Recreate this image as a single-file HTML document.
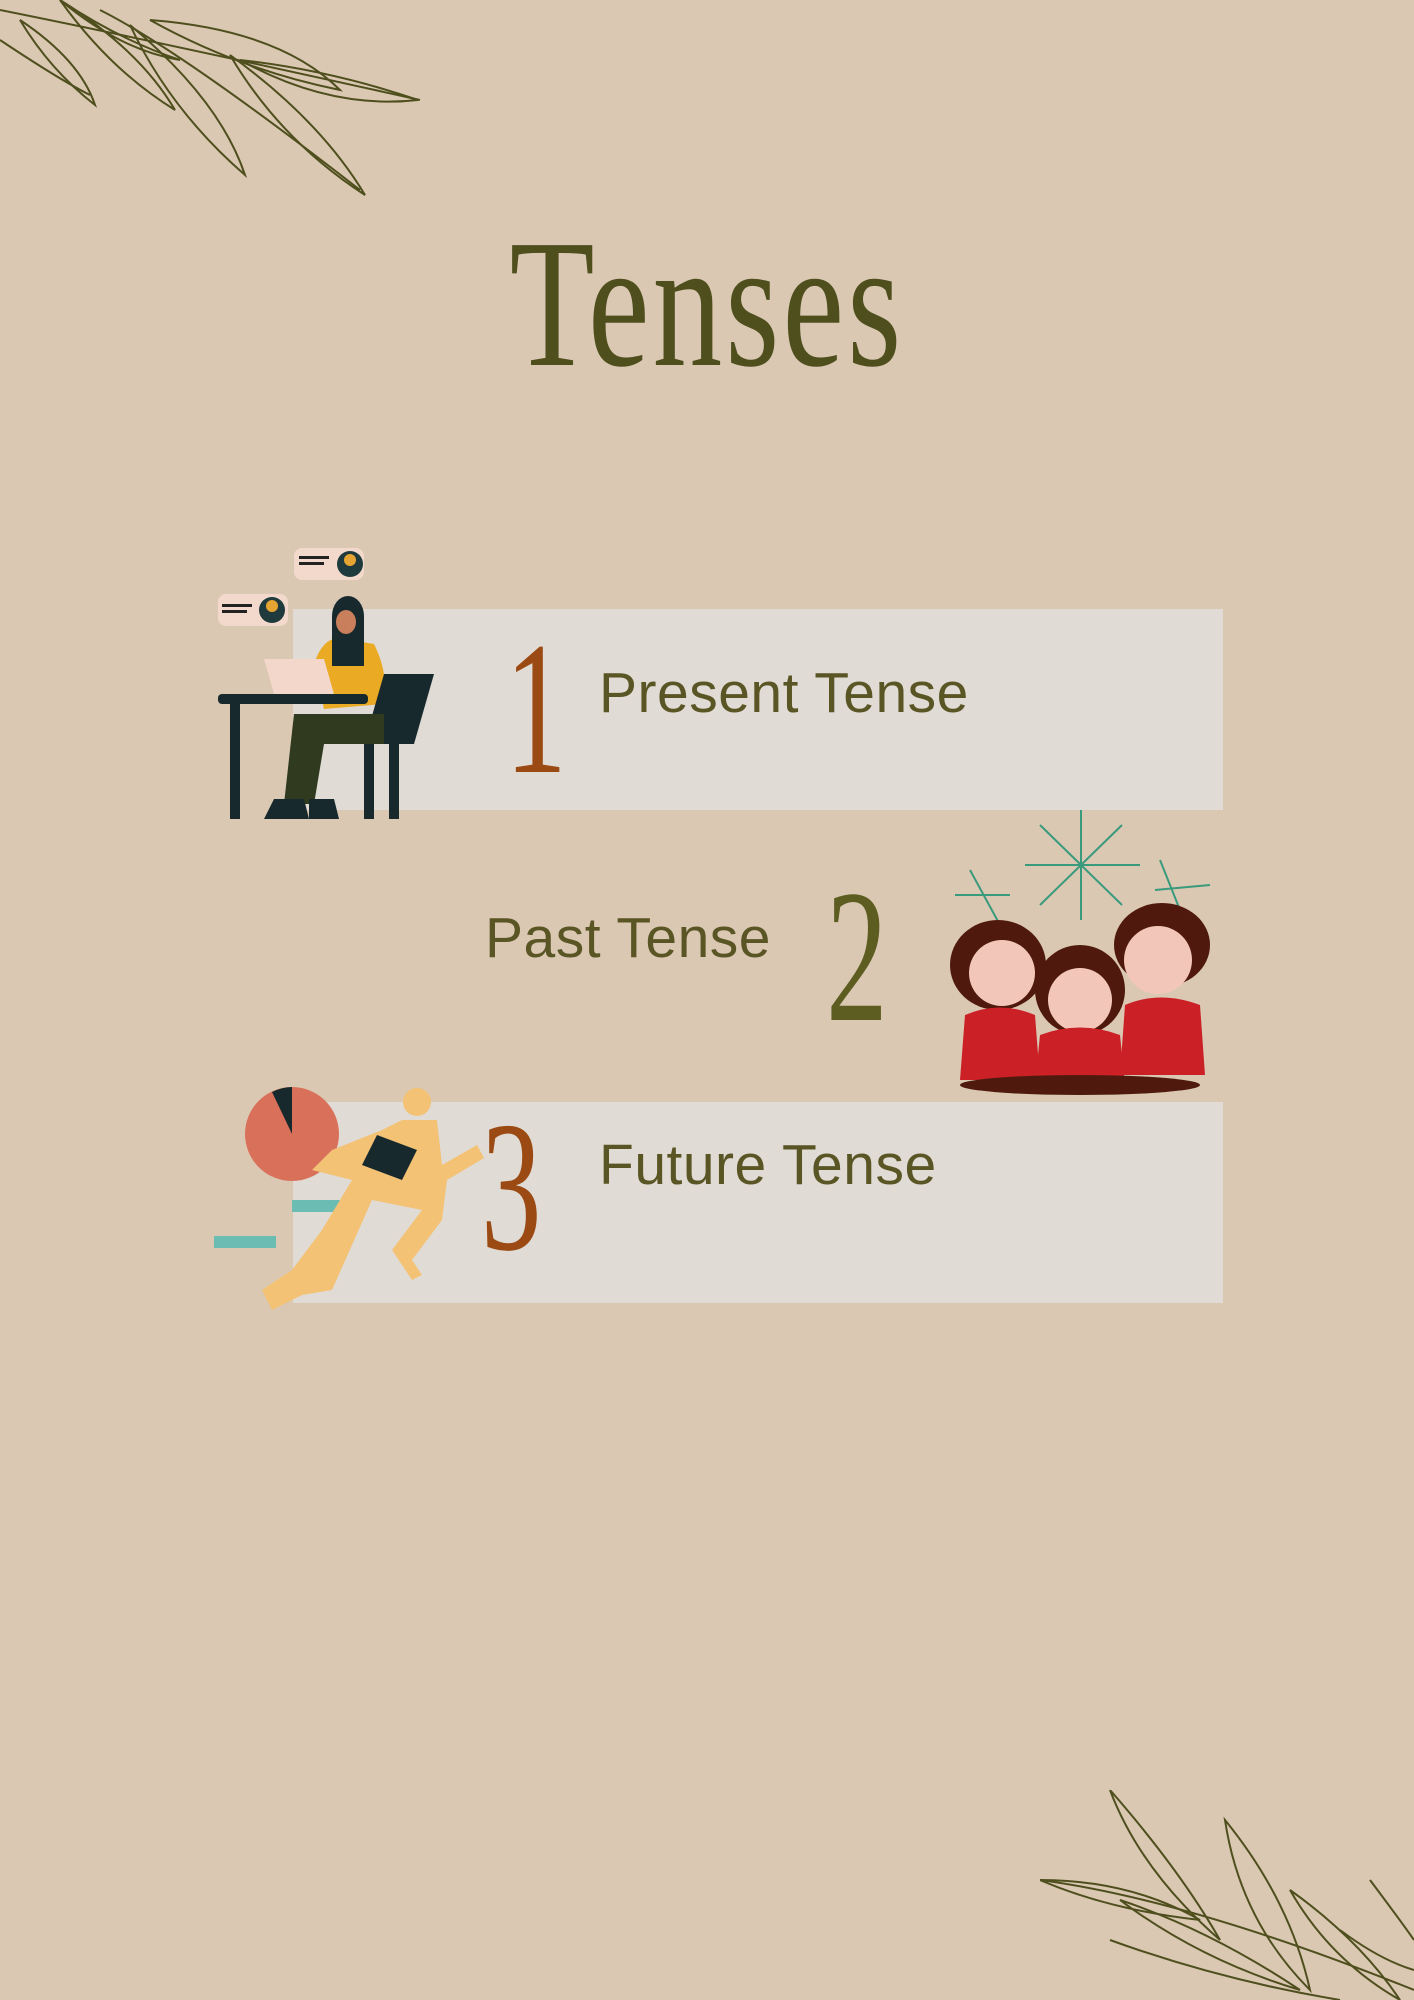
<!DOCTYPE html>
<html><head><meta charset="utf-8"><style>
html,body{margin:0;padding:0}
body{width:1414px;height:2000px;background:#dac8b3;position:relative;overflow:hidden;font-family:"Liberation Sans",sans-serif}
.abs{position:absolute}
.box{position:absolute;left:293px;width:930px;height:201px;background:#e0dbd4}
.title{position:absolute;left:0;width:1414px;top:212px;text-align:center;font-family:"Liberation Serif",serif;font-size:183px;color:#4f4f1e;transform:scaleX(0.76);transform-origin:707px 0;line-height:1;letter-spacing:4px}
.num{position:absolute;font-family:"Liberation Serif",serif;line-height:1;transform:scaleX(0.65);transform-origin:0 0}
.lbl{position:absolute;font-size:57px;color:#5a5524;line-height:1;letter-spacing:0.5px}
</style></head><body>
<svg class="abs" style="left:0;top:0" width="430" height="200" viewBox="0 0 430 200" fill="none" stroke="#4f4f1e" stroke-width="2">
<path d="M0 10 Q150 40 420 100"/><path d="M100 10 Q180 50 360 190"/>
<path d="M240 60 Q330 70 418 100 Q330 110 240 60Z"/><path d="M150 20 Q280 30 340 90 Q240 70 150 20Z"/>
<path d="M230 55 Q320 120 365 195 Q280 140 230 55Z"/><path d="M130 25 Q220 100 245 175 Q170 110 130 25Z"/>
<path d="M60 0 Q140 50 175 110 Q110 70 60 0Z"/><path d="M20 20 Q80 60 95 105 Q50 70 20 20Z"/>
<path d="M0 40 Q60 80 90 95"/><path d="M60 0 Q120 40 180 60 Q120 50 60 0Z"/>
</svg>
<svg class="abs" style="left:1040px;top:1790px" width="374" height="210" viewBox="0 0 374 210" fill="none" stroke="#4f4f1e" stroke-width="2">
<path d="M0 90 Q150 110 374 200"/><path d="M70 150 Q180 190 300 210"/>
<path d="M70 0 Q140 80 180 150 Q100 80 70 0Z"/><path d="M185 30 Q250 110 270 200 Q200 130 185 30Z"/>
<path d="M0 90 Q90 90 160 130 Q70 120 0 90Z"/><path d="M80 110 Q170 140 260 200 Q160 170 80 110Z"/>
<path d="M250 100 Q320 150 360 210 Q290 170 250 100Z"/><path d="M330 90 Q360 130 374 150"/>
<path d="M300 140 Q340 170 374 180"/>
</svg>
<div class="title">Tenses</div>
<div class="box" style="top:609px"></div>
<div class="box" style="top:1102px"></div>
<div class="num" style="left:505px;top:614px;font-size:190px;color:#9a4a12">1</div>
<div class="lbl" style="left:599px;top:665px">Present Tense</div>
<div class="num" style="left:826px;top:862px;font-size:190px;color:#5d5d22">2</div>
<div class="lbl" style="left:485px;top:910px">Past Tense</div>
<div class="num" style="left:481px;top:1094px;font-size:186px;color:#9a4a12">3</div>
<div class="lbl" style="left:599px;top:1137px">Future Tense</div>
<!-- person at desk -->
<svg class="abs" style="left:214px;top:544px" width="226" height="280" viewBox="0 0 226 280">
<rect x="80" y="4" width="70" height="32" rx="8" fill="#f3d9cc"/><circle cx="136" cy="20" r="13" fill="#1e3a3c"/><circle cx="136" cy="16" r="6" fill="#e6a532"/>
<rect x="4" y="50" width="70" height="32" rx="8" fill="#f3d9cc"/><circle cx="58" cy="66" r="13" fill="#1e3a3c"/><circle cx="58" cy="62" r="6" fill="#e6a532"/>
<rect x="85" y="12" width="30" height="3" fill="#222"/><rect x="85" y="18" width="25" height="3" fill="#222"/><rect x="8" y="60" width="30" height="3" fill="#222"/><rect x="8" y="66" width="25" height="3" fill="#222"/>
<path d="M100 120 Q110 90 130 95 L160 100 Q175 130 170 160 L110 165Z" fill="#eaaa23"/>
<ellipse cx="134" cy="72" rx="16" ry="20" fill="#17292d"/><rect x="118" y="72" width="32" height="50" fill="#17292d"/>
<ellipse cx="132" cy="78" rx="10" ry="12" fill="#c97f5b"/>
<path d="M50 115 L110 115 L120 150 L60 150Z" fill="#f2d7ca"/>
<rect x="4" y="150" width="150" height="10" rx="4" fill="#17292d"/><rect x="16" y="155" width="10" height="120" fill="#17292d"/>
<path d="M170 130 L220 130 L200 200 L150 200Z" fill="#17292d"/><rect x="150" y="195" width="10" height="80" fill="#17292d"/><rect x="175" y="195" width="10" height="80" fill="#17292d"/>
<path d="M80 170 L170 170 L170 200 L110 200 L100 260 L70 260Z" fill="#2f3a1f"/>
<path d="M60 255 L90 255 L95 275 L50 275Z" fill="#17292d"/><path d="M95 255 L120 255 L125 275 L95 275Z" fill="#17292d"/>
</svg>
<!-- kids -->
<svg class="abs" style="left:940px;top:805px" width="285" height="290" viewBox="0 0 285 290" fill="none">
<g stroke="#3a9a7c" stroke-width="2"><path d="M141 5 L141 115 M85 60 L200 60 M100 20 L182 100 M182 20 L100 100"/><path d="M30 65 L60 120 M15 90 L70 90 M220 55 L240 105 M215 85 L270 80"/></g>
<ellipse cx="58" cy="160" rx="48" ry="45" fill="#4f1a0d"/><circle cx="62" cy="168" r="33" fill="#f2c7b9"/>
<ellipse cx="222" cy="140" rx="48" ry="42" fill="#4f1a0d"/><circle cx="218" cy="155" r="34" fill="#f2c7b9"/>
<ellipse cx="140" cy="185" rx="45" ry="45" fill="#4f1a0d"/><circle cx="140" cy="195" r="32" fill="#f2c7b9"/>
<path d="M25 210 Q60 195 95 210 L100 275 L20 275Z" fill="#cc2027"/><path d="M185 200 Q220 185 260 200 L265 270 L180 270Z" fill="#cc2027"/>
<path d="M100 230 Q140 215 180 230 L185 280 L95 280Z" fill="#cc2027"/>
<ellipse cx="140" cy="280" rx="120" ry="10" fill="#4f1a0d"/>
</svg>
<!-- runner -->
<svg class="abs" style="left:212px;top:1080px" width="280" height="242" viewBox="0 0 280 242">
<circle cx="80" cy="54" r="47" fill="#d9705a"/><path d="M80 54 L80 7 A47 47 0 0 0 60 12Z" fill="#17292d"/>
<rect x="80" y="120" width="65" height="12" fill="#6bbcb2"/><rect x="2" y="156" width="62" height="12" fill="#6bbcb2"/>
<circle cx="205" cy="22" r="14" fill="#f3c275"/>
<path d="M190 40 L225 40 L230 85 L265 65 L272 78 L235 100 L230 140 L200 180 L210 195 L200 200 L180 170 L210 130 L160 120 L120 210 L90 215 L60 230 L50 210 L80 190 L110 150 L140 100 L100 90 L120 70 L170 50Z" fill="#f3c275"/>
<path d="M165 55 L205 70 L190 100 L150 85Z" fill="#17292d"/>
</svg>
</body></html>
